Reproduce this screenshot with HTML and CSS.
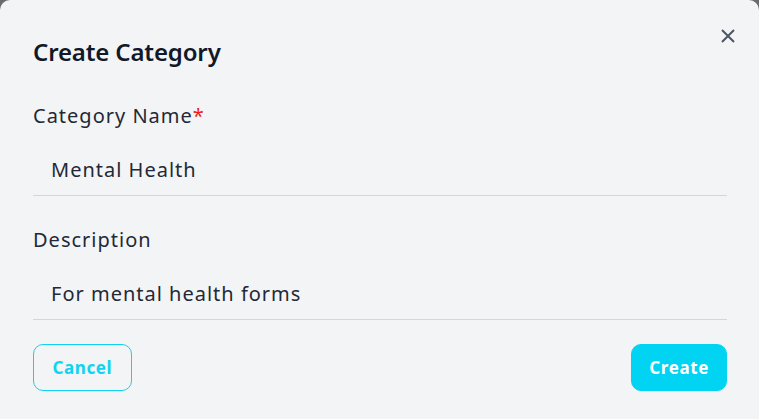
FILE: index.html
```html
<!DOCTYPE html>
<html>
<head>
<meta charset="utf-8">
<link rel="stylesheet" href="styles.css">
</head>
<body>
<div class="modal">
  <div class="header">
    <h2 class="title">Create Category</h2>
    <button class="close" aria-label="Close">
      <svg width="14" height="14" viewBox="0 0 14 14"><path d="M1 1L13 13M13 1L1 13" stroke="#4b5563" stroke-width="2" stroke-linecap="butt" fill="none"/></svg>
    </button>
  </div>
  <div class="field first">
    <label class="label">Category Name<span class="req">*</span></label>
    <div class="input">Mental Health</div>
  </div>
  <div class="field">
    <label class="label">Description</label>
    <div class="input">For mental health forms</div>
  </div>
  <div class="actions">
    <button class="btn btn-outline">Cancel</button>
    <button class="btn btn-fill">Create</button>
  </div>
</div>
</body>
</html>
```
FILE: styles.css
```css
html, body {
  margin: 0;
  height: 100%;
}
body {
  background: #6b6b6b;
  font-family: "Noto Sans", "Open Sans", sans-serif;
  overflow: hidden;
}
.modal {
  background: #f3f4f6;
  border-radius: 10px 10px 0 0;
  min-height: 100vh;
  box-sizing: border-box;
  padding: 36px 32px 0 33px;
}
.header {
  display: flex;
  justify-content: space-between;
  align-items: flex-start;
}
.title {
  margin: 0;
  font-size: 24px;
  line-height: 32px;
  font-weight: 600;
  color: #111827;
  letter-spacing: -0.15px;
}
.close {
  background: none;
  border: 0;
  padding: 0;
  margin: -7px -8px 0 0;
  width: 14px;
  height: 14px;
  display: flex;
}
.field {
  display: flex;
  flex-direction: column;
  margin-top: 32px;
}
.field.first {
  margin-top: 36px;
}
.label {
  font-size: 20px;
  line-height: 24px;
  color: #1f2937;
  letter-spacing: 1px;
}
.req {
  color: #ef1c1c;
  letter-spacing: 0;
}
.input {
  margin-top: 18px;
  padding: 12px 18px 13px;
  font-size: 20px;
  line-height: 24px;
  color: #1f2937;
  letter-spacing: 1px;
  border-bottom: 1px solid #d4d6da;
}
.actions {
  display: flex;
  justify-content: space-between;
  margin-top: 24px;
}
.btn {
  height: 47px;
  border-radius: 10px;
  font-family: inherit;
  font-size: 17px;
  font-weight: 700;
  letter-spacing: 0.6px;
  padding: 0 18.5px;
  cursor: pointer;
}
.btn-outline {
  background: transparent;
  border: 1px solid #0fd3f0;
  color: #0fd3f0;
}
.btn-fill {
  background: #00d4f2;
  border: 1px solid #00d4f2;
  color: #ffffff;
  padding: 0 17px;
}
```
